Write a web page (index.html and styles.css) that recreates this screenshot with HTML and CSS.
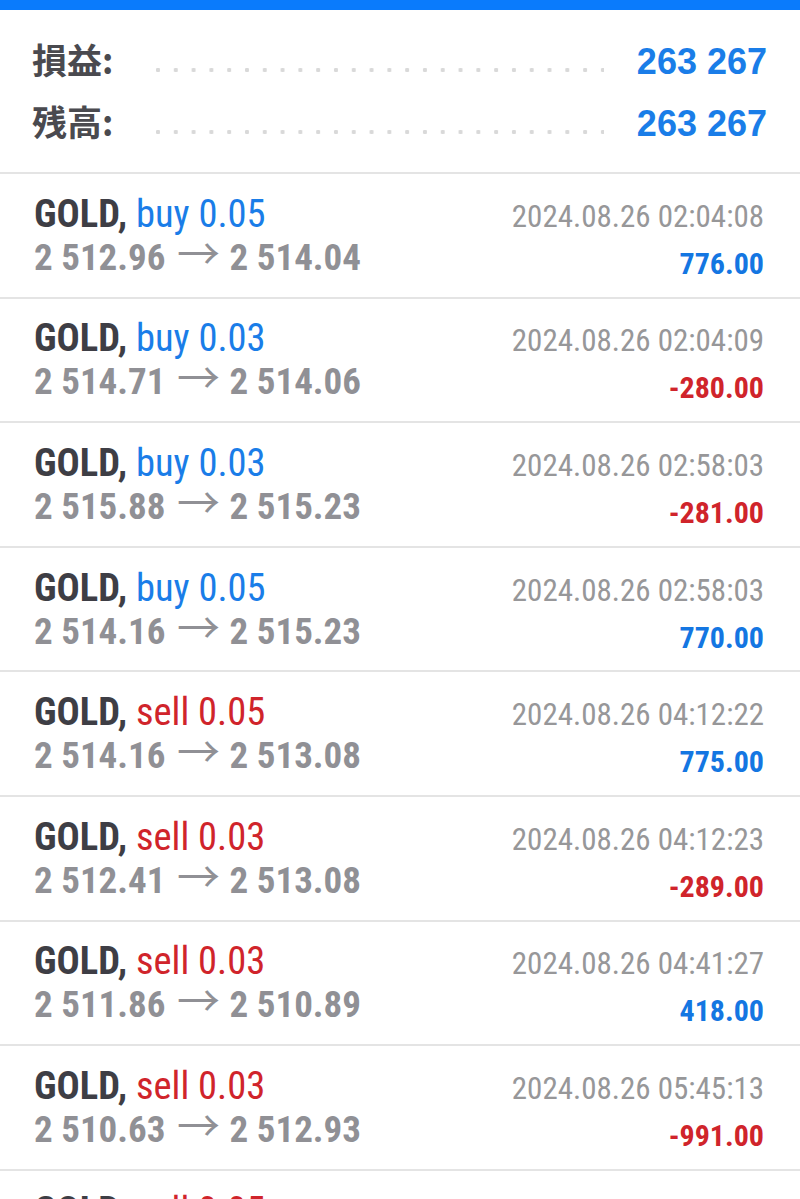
FILE: index.html
```html
<!DOCTYPE html>
<html lang="ja">
<head>
<meta charset="utf-8">
<title>履歴</title>
<link rel="stylesheet" href="styles.css">
</head>
<body>
<div class="topbar"></div>
<section class="summary">
  <div class="sum-row">
    <span class="sum-label">損益:</span>
    <span class="leader"></span>
    <span class="sum-value">263 267</span>
  </div>
  <div class="sum-row">
    <span class="sum-label">残高:</span>
    <span class="leader"></span>
    <span class="sum-value">263 267</span>
  </div>
</section>
<ul class="deals">
  <li class="deal">
    <div class="line"><span class="title"><b class="sym">GOLD,</b> <span class="buy">buy 0.05</span></span><span class="time">2024.08.26 02:04:08</span></div>
    <div class="line"><span class="price">2 512.96 <span class="arrow">→</span> 2 514.04</span><span class="profit pos">776.00</span></div>
  </li>
  <li class="deal">
    <div class="line"><span class="title"><b class="sym">GOLD,</b> <span class="buy">buy 0.03</span></span><span class="time">2024.08.26 02:04:09</span></div>
    <div class="line"><span class="price">2 514.71 <span class="arrow">→</span> 2 514.06</span><span class="profit neg">-280.00</span></div>
  </li>
  <li class="deal">
    <div class="line"><span class="title"><b class="sym">GOLD,</b> <span class="buy">buy 0.03</span></span><span class="time">2024.08.26 02:58:03</span></div>
    <div class="line"><span class="price">2 515.88 <span class="arrow">→</span> 2 515.23</span><span class="profit neg">-281.00</span></div>
  </li>
  <li class="deal">
    <div class="line"><span class="title"><b class="sym">GOLD,</b> <span class="buy">buy 0.05</span></span><span class="time">2024.08.26 02:58:03</span></div>
    <div class="line"><span class="price">2 514.16 <span class="arrow">→</span> 2 515.23</span><span class="profit pos">770.00</span></div>
  </li>
  <li class="deal">
    <div class="line"><span class="title"><b class="sym">GOLD,</b> <span class="sell">sell 0.05</span></span><span class="time">2024.08.26 04:12:22</span></div>
    <div class="line"><span class="price">2 514.16 <span class="arrow">→</span> 2 513.08</span><span class="profit pos">775.00</span></div>
  </li>
  <li class="deal">
    <div class="line"><span class="title"><b class="sym">GOLD,</b> <span class="sell">sell 0.03</span></span><span class="time">2024.08.26 04:12:23</span></div>
    <div class="line"><span class="price">2 512.41 <span class="arrow">→</span> 2 513.08</span><span class="profit neg">-289.00</span></div>
  </li>
  <li class="deal">
    <div class="line"><span class="title"><b class="sym">GOLD,</b> <span class="sell">sell 0.03</span></span><span class="time">2024.08.26 04:41:27</span></div>
    <div class="line"><span class="price">2 511.86 <span class="arrow">→</span> 2 510.89</span><span class="profit pos">418.00</span></div>
  </li>
  <li class="deal">
    <div class="line"><span class="title"><b class="sym">GOLD,</b> <span class="sell">sell 0.03</span></span><span class="time">2024.08.26 05:45:13</span></div>
    <div class="line"><span class="price">2 510.63 <span class="arrow">→</span> 2 512.93</span><span class="profit neg">-991.00</span></div>
  </li>
  <li class="deal">
    <div class="line"><span class="title"><b class="sym">GOLD,</b> <span class="sell">sell 0.05</span></span><span class="time">2024.08.26 05:45:14</span></div>
    <div class="line"><span class="price">2 510.63 <span class="arrow">→</span> 2 512.93</span><span class="profit pos">0.00</span></div>
  </li>
</ul>
</body>
</html>
```

FILE: styles.css
```css
html, body {
  margin: 0;
  padding: 0;
  background: #ffffff;
}

body {
  font-family: Roboto, "Noto Sans", sans-serif;
  overflow: hidden;
}

.topbar {
  height: 10px;
  background: #0a7bfc;
}

.summary {
  padding: 18px 33px 20px 32px;
}

.sum-row {
  display: flex;
  align-items: baseline;
  height: 62px;
}

.sum-label {
  font-family: "Noto Sans CJK JP", "Noto Sans CJK SC", sans-serif;
  font-weight: 700;
  font-size: 35px;
  line-height: 62px;
  color: #4a4a4f;
}

.leader {
  flex: 1;
  align-self: flex-start;
  height: 4px;
  margin: 40px 33px 0 43px;
  background-image: radial-gradient(circle at 2px 2px, #d9d9d9 2px, rgba(217,217,217,0) 2.4px);
  background-size: 17.8px 4px;
  background-repeat: repeat-x;
}

.sum-value {
  font-family: "Liberation Sans", Arial, sans-serif;
  font-weight: 700;
  font-size: 36px;
  line-height: 62px;
  color: #1a7de8;
}

.deals {
  list-style: none;
  margin: 0;
  padding: 0;
}

.deal {
  box-sizing: border-box;
  height: 124.6px;
  border-top: 2px solid #e4e4e4;
  padding: 17.9px 36px 0 34px;
}

.line {
  display: flex;
  justify-content: space-between;
  align-items: baseline;
  height: 44px;
  line-height: 44px;
  white-space: nowrap;
}

.title {
  font-size: 38.5px;
  font-stretch: 75%;
}

.sym {
  font-weight: 700;
  color: #3e3e45;
}

.buy {
  color: #1a7de8;
}

.sell {
  color: #d0242b;
}

.time {
  align-self: flex-start;
  font-size: 31px;
  line-height: 50px;
  font-stretch: 75%;
  color: #979799;
}

.price {
  font-size: 37px;
  font-weight: 700;
  font-stretch: 75%;
  color: #909095;
}

.arrow {
  font-family: "Noto Sans CJK JP", sans-serif;
  font-weight: 400;
  font-size: 43px;
  line-height: 0;
  margin: 0 1px 0 3px;
}

.profit {
  align-self: flex-start;
  font-size: 30px;
  line-height: 55px;
  font-weight: 700;
  font-stretch: 75%;
}

.pos {
  color: #1476e2;
}

.neg {
  color: #d0242b;
}
```
